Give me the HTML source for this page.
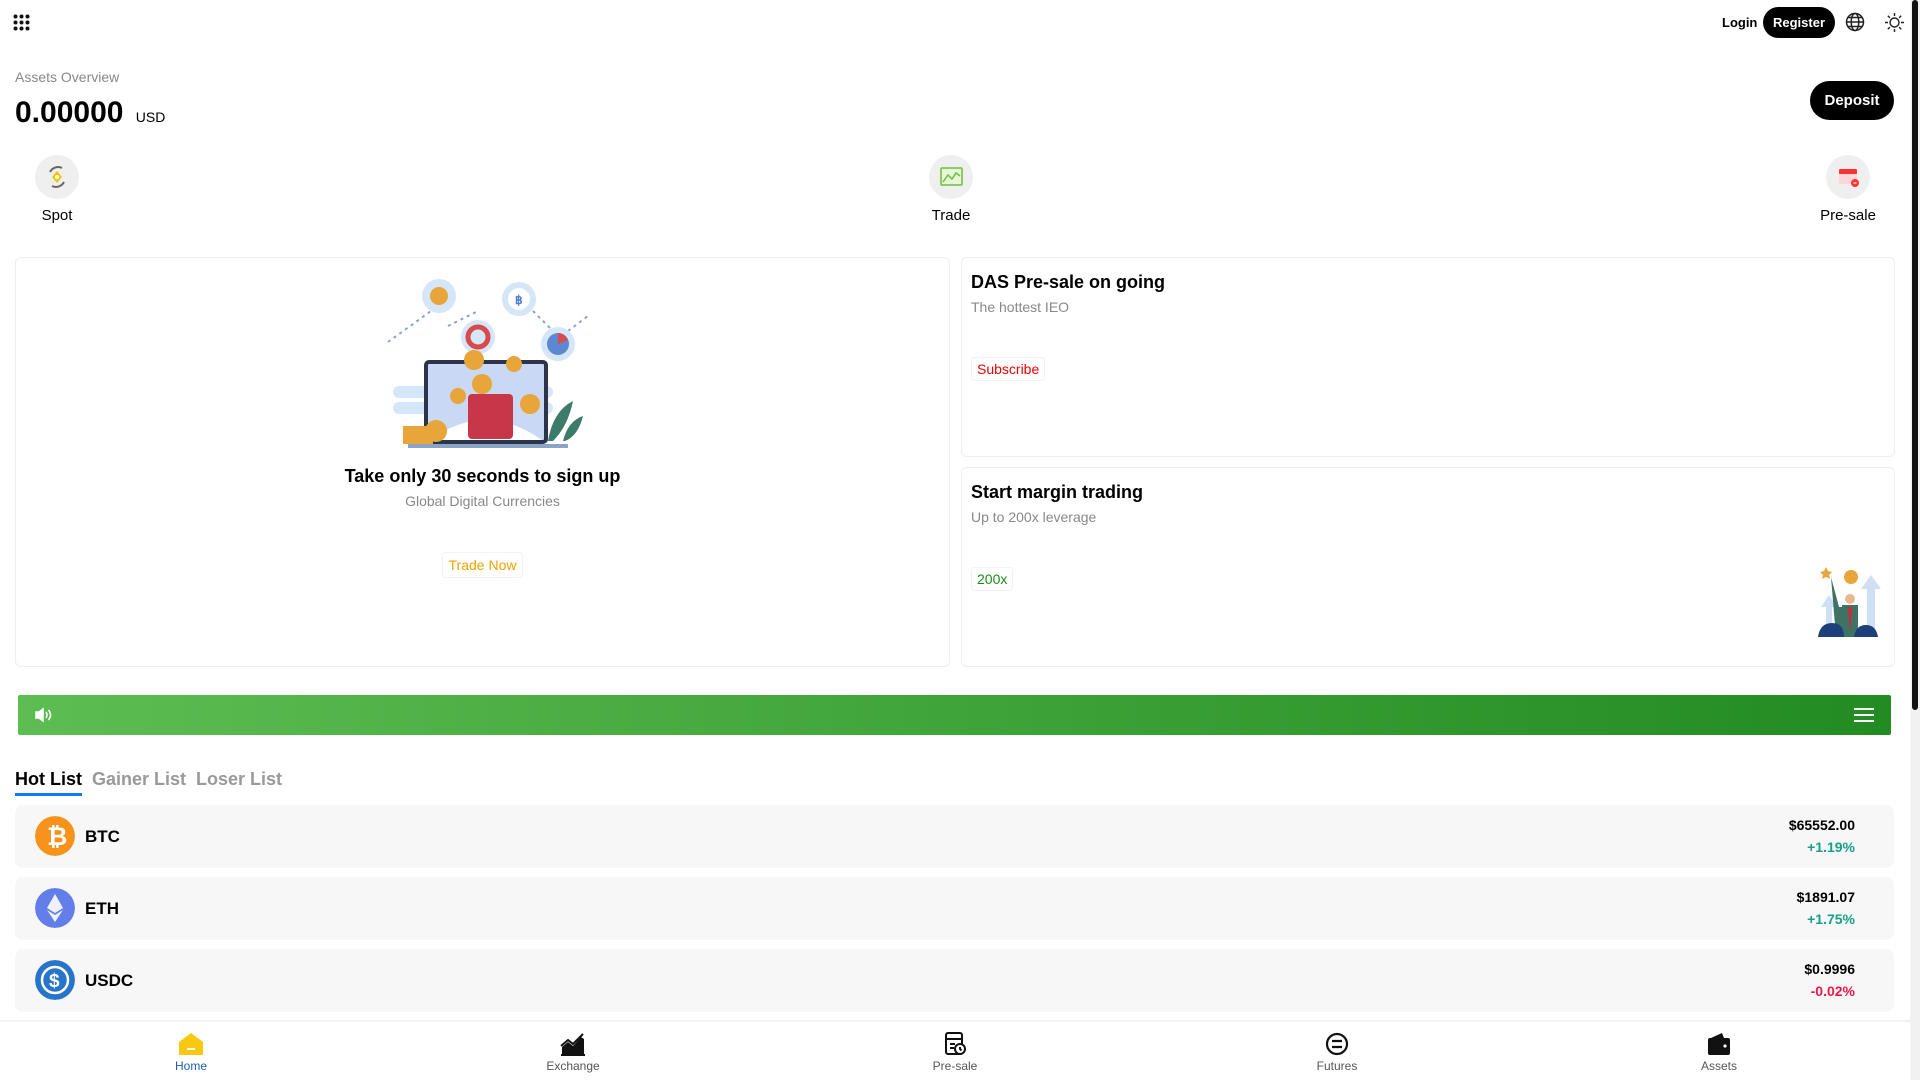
<!DOCTYPE html>
<html><head><meta charset="utf-8"><style>
*{margin:0;padding:0;box-sizing:border-box}
html,body{width:1920px;height:1080px;overflow:hidden;background:#fff;font-family:"Liberation Sans",Arial,sans-serif;color:#000}
.abs{position:absolute}
.sb{position:absolute;right:0;top:0;width:10px;height:1080px;background:#f1f1f1}
.sb i{position:absolute;left:2px;top:0;width:6px;height:710px;background:#111;border-radius:3px}
.ic{position:absolute;width:44px;height:44px;border-radius:50%;background:#efefef;top:155px}
.lbl{position:absolute;top:207px;font-size:15px;width:120px;text-align:center}
.card{position:absolute;border:1px solid #eee;border-radius:6px;background:#fff}
.row{position:absolute;left:15px;width:1879px;height:63px;background:#f7f7f7;border-radius:8px}
.row .c{position:absolute;left:20px;top:11px;width:40px;height:40px;border-radius:50%}
.row .n{position:absolute;left:70px;top:22px;font-size:17px;font-weight:bold}
.row .p{position:absolute;right:39px;top:12px;font-size:14px;font-weight:bold;text-align:right}
.row .ch{position:absolute;right:39px;top:34px;font-size:14px;font-weight:bold;text-align:right}
.nav{position:absolute;top:1020px;left:0;width:1910px;height:60px;border-top:2px solid #f2f2f2}
.ni{position:absolute;width:120px;text-align:center;font-size:12px;color:#555;top:0}
.ni svg{display:block;margin:10px auto 0}
.ni span{display:block;margin-top:3px}
</style></head><body>
<div class="sb"><i></i></div>
<svg class="abs" style="left:13px;top:14px" width="17" height="17" viewBox="0 0 17 17" fill="#111"><circle cx="2.5" cy="2.5" r="2"/><circle cx="8.5" cy="2.5" r="2"/><circle cx="14.5" cy="2.5" r="2"/><circle cx="2.5" cy="8.5" r="2"/><circle cx="8.5" cy="8.5" r="2"/><circle cx="14.5" cy="8.5" r="2"/><circle cx="2.5" cy="14.5" r="2"/><circle cx="8.5" cy="14.5" r="2"/><circle cx="14.5" cy="14.5" r="2"/></svg>
<div class="abs" style="left:1722px;top:15px;font-size:13px;font-weight:bold">Login</div>
<div class="abs" style="left:1763px;top:7px;width:72px;height:31px;background:#000;color:#fff;border-radius:16px;font-size:13px;font-weight:bold;text-align:center;line-height:31px">Register</div>
<svg class="abs" style="left:1845px;top:12px" width="20" height="20" viewBox="0 0 20 20" fill="none" stroke="#222" stroke-width="1.5"><circle cx="10" cy="10" r="8.5"/><ellipse cx="10" cy="10" rx="3.8" ry="8.5"/><path d="M1.5 10h17M3 5.5h14M3 14.5h14"/></svg>
<svg class="abs" style="left:1884px;top:12px" width="21" height="21" viewBox="0 0 21 21" fill="none" stroke="#222" stroke-width="1.4"><circle cx="10.5" cy="10.5" r="4.5"/><path d="M10.5 1v3M10.5 17v3M1 10.5h3M17 10.5h3M3.8 3.8l2.1 2.1M15.1 15.1l2.1 2.1M3.8 17.2l2.1-2.1M15.1 5.9l2.1-2.1"/></svg>

<div class="abs" style="left:15px;top:69px;font-size:14px;color:#888">Assets Overview</div>
<div class="abs" style="left:15px;top:96px;font-size:30px;font-weight:bold">0.00000 <span style="font-size:14px;font-weight:normal;margin-left:4px">USD</span></div>
<div class="abs" style="left:1810px;top:81px;width:84px;height:39px;background:#000;color:#fff;border-radius:20px;font-size:15px;font-weight:bold;text-align:center;line-height:39px">Deposit</div>

<div class="ic" style="left:35px"><svg width="44" height="44" viewBox="0 0 44 44"><path d="M15 17a9 9 0 0 1 12-4M29 27a9 9 0 0 1-12 4" stroke="#666" stroke-width="2" fill="none"/><path d="M22 16l5 6-5 6-5-6z" fill="#f5c400"/><circle cx="22" cy="22" r="2" fill="#fff"/></svg></div>
<div class="lbl" style="left:-3px">Spot</div>
<div class="ic" style="left:929px"><svg width="44" height="44" viewBox="0 0 44 44"><rect x="12" y="13" width="21" height="17" rx="1" fill="#e7f5d8" stroke="#6cbf3a" stroke-width="1.5"/><path d="M14 27l5-7 4 4 4-6 4 3" stroke="#6cbf3a" stroke-width="1.5" fill="none"/></svg></div>
<div class="lbl" style="left:891px">Trade</div>
<div class="ic" style="left:1826px"><svg width="44" height="44" viewBox="0 0 44 44"><rect x="13" y="14" width="18" height="15" rx="2" fill="#ffd6d6"/><rect x="13" y="14" width="18" height="5" rx="1" fill="#f33"/><circle cx="29" cy="28" r="4" fill="#f33"/><path d="M27.5 28h3" stroke="#fff" stroke-width="1.2"/></svg></div>
<div class="lbl" style="left:1788px">Pre-sale</div>

<div class="card" style="left:15px;top:257px;width:935px;height:410px">
  <svg class="abs" style="left:362px;top:18px" width="210" height="175" viewBox="0 0 210 175">
    <path d="M10 66L60 30M70 50L100 35M150 30L180 60M190 55L210 40" stroke="#8aa4c8" stroke-width="2" stroke-dasharray="3 4"/>
    <circle cx="61" cy="20" r="17" fill="#d5e6f8"/><circle cx="61" cy="20" r="9" fill="#e8a53a"/>
    <circle cx="141" cy="23" r="17" fill="#d5e6f8"/><circle cx="141" cy="23" r="11" fill="#fff"/><text x="137" y="28" font-size="12" fill="#4a7bd0" font-weight="bold">฿</text>
    <circle cx="100" cy="61" r="17" fill="#d5e6f8"/><circle cx="100" cy="61" r="10" fill="none" stroke="#d94a4a" stroke-width="5"/>
    <circle cx="180" cy="68" r="17" fill="#d5e6f8"/><circle cx="180" cy="68" r="11" fill="#5b88d0"/><path d="M180 68V57A11 11 0 0 1 190 64z" fill="#d94a4a"/>
    <rect x="15" y="110" width="160" height="12" rx="6" fill="#d5e6f8"/><rect x="15" y="126" width="160" height="12" rx="6" fill="#d5e6f8"/>
    <rect x="48" y="86" width="120" height="80" rx="3" fill="#c8d8f5" stroke="#2b3448" stroke-width="4"/>
    <path d="M52 164q55-40 112 0z" fill="#fff"/>
    <rect x="90" y="118" width="45" height="45" rx="4" fill="#c8364a"/>
    <rect x="30" y="168" width="160" height="4" fill="#8aa4c8"/>
    <circle cx="104" cy="108" r="10" fill="#e8a53a"/><circle cx="80" cy="120" r="8" fill="#e8a53a"/><circle cx="152" cy="128" r="10" fill="#e8a53a"/><circle cx="136" cy="88" r="8" fill="#e8a53a"/><circle cx="96" cy="84" r="10" fill="#e8a53a"/>
    <rect x="25" y="150" width="30" height="18" fill="#e8a53a"/><circle cx="58" cy="155" r="11" fill="#e8a53a"/>
    <path d="M170 165q5-30 25-40q-5 25-20 40zM185 165q5-20 20-25q-5 20-18 25z" fill="#3c7a6a"/>
  </svg>
  <div class="abs" style="left:0;width:100%;top:208px;text-align:center;font-size:18px;font-weight:bold">Take only 30 seconds to sign up</div>
  <div class="abs" style="left:0;width:100%;top:235px;text-align:center;font-size:14px;color:#888">Global Digital Currencies</div>
  <div class="abs" style="left:426px;top:294px;width:81px;height:26px;border:1px solid #f2f2f2;border-radius:4px;text-align:center;line-height:24px;font-size:14px;color:#f2a100">Trade Now</div>
</div>
<div class="card" style="left:961px;top:257px;width:934px;height:200px">
  <div class="abs" style="left:9px;top:14px;font-size:18px;font-weight:bold">DAS Pre-sale on going</div>
  <div class="abs" style="left:9px;top:41px;font-size:14px;color:#888">The hottest IEO</div>
  <div class="abs" style="left:9px;top:99px;height:24px;padding:0 5px;border:1px solid #f2f2f2;border-radius:4px;line-height:22px;font-size:14px;color:#e00">Subscribe</div>
</div>
<div class="card" style="left:961px;top:467px;width:934px;height:200px">
  <div class="abs" style="left:9px;top:14px;font-size:18px;font-weight:bold">Start margin trading</div>
  <div class="abs" style="left:9px;top:41px;font-size:14px;color:#888">Up to 200x leverage</div>
  <div class="abs" style="left:9px;top:99px;height:24px;padding:0 5px;border:1px solid #f2f2f2;border-radius:4px;line-height:22px;font-size:14px;color:#1a8a1a">200x</div>
  <svg class="abs" style="left:854px;top:97px" width="68" height="72" viewBox="0 0 68 72">
    <path d="M55 10l10 14h-6v48h-8V24h-6z" fill="#cfe0f5"/><path d="M13 30l8 12h-5v30h-6V42H5z" fill="#cfe0f5"/>
    <circle cx="35" cy="12" r="7" fill="#e8a53a"/>
    <path d="M15 12l8 30h18v30H20z" fill="#3e7264"/><rect x="26" y="40" width="16" height="32" fill="#3e7264"/>
    <path d="M32 42l2 25 2-25z" fill="#d23"/><circle cx="34" cy="34" r="5" fill="#e9b98e"/>
    <path d="M2 72q2-14 14-14q12 0 12 14zM38 72q2-12 12-12q10 0 12 12z" fill="#1d3f7a"/>
    <path d="M10 2l2 4 4 1-3 3 1 4-4-2-4 2 1-4-3-3 4-1z" fill="#e8a53a"/>
  </svg>
</div>

<div class="abs" style="left:18px;top:695px;width:1873px;height:40px;border-radius:2px;background:linear-gradient(90deg,#5cbd52,#228b22)">
  <svg class="abs" style="left:17px;top:12px" width="18" height="16" viewBox="0 0 18 16" fill="none" stroke="#fff" stroke-width="1.6"><path d="M1 5h3l4-3v12l-4-3H1z" fill="#fff"/><path d="M11 5q2 3 0 6M13.5 3q4 5 0 10"/></svg>
  <svg class="abs" style="left:1836px;top:12px" width="20" height="16" viewBox="0 0 20 16" stroke="#fff" stroke-width="2"><path d="M0 2h20M0 8h20M0 14h20"/></svg>
</div>

<div class="abs" style="left:15px;top:769px;font-size:18px;font-weight:bold">Hot List</div>
<div class="abs" style="left:15px;top:793px;width:67px;height:3px;background:#1677ff"></div>
<div class="abs" style="left:92px;top:769px;font-size:18px;font-weight:bold;color:#999">Gainer List</div>
<div class="abs" style="left:196px;top:769px;font-size:18px;font-weight:bold;color:#999">Loser List</div>

<div class="row" style="top:805px"><svg class="c" viewBox="0 0 40 40"><circle cx="20" cy="20" r="20" fill="#f7931a"/><text x="12" y="29" font-size="25" font-weight="bold" fill="#fff" font-family="Liberation Sans">₿</text></svg><div class="n">BTC</div><div class="p">$65552.00</div><div class="ch" style="color:#16a085">+1.19%</div></div>
<div class="row" style="top:877px"><svg class="c" viewBox="0 0 40 40"><circle cx="20" cy="20" r="20" fill="#627eea"/><path d="M20 6l-8 14 8 5 8-5z" fill="#fff" opacity=".9"/><path d="M20 27l-8-5 8 12 8-12z" fill="#fff" opacity=".9"/></svg><div class="n">ETH</div><div class="p">$1891.07</div><div class="ch" style="color:#16a085">+1.75%</div></div>
<div class="row" style="top:949px"><svg class="c" viewBox="0 0 40 40"><circle cx="20" cy="20" r="20" fill="#2775ca"/><circle cx="20" cy="20" r="13" fill="none" stroke="#fff" stroke-width="2.5"/><text x="14" y="27" font-size="19" font-weight="bold" fill="#fff" font-family="Liberation Sans">$</text></svg><div class="n">USDC</div><div class="p">$0.9996</div><div class="ch" style="color:#e8194a">-0.02%</div></div>

<div class="nav">
  <div class="ni" style="left:131px;color:#1a5fb4"><svg width="26" height="24" viewBox="0 0 26 24"><path d="M13 1L1 10v13h24V10z" fill="#f9c810"/><rect x="9" y="16" width="8" height="2" fill="#fff"/></svg><span>Home</span></div>
  <div class="ni" style="left:513px"><svg width="26" height="24" viewBox="0 0 26 24"><path d="M2 22V15l6-5 5 4 8-9 3 2v15z" fill="#111"/><path d="M1 14l7-6 5 4 10-10" stroke="#111" stroke-width="2" fill="none"/><rect x="1" y="22" width="24" height="2" fill="#111"/></svg><span>Exchange</span></div>
  <div class="ni" style="left:895px"><svg width="26" height="24" viewBox="0 0 26 24" fill="none" stroke="#111" stroke-width="2"><rect x="4" y="1" width="16" height="21" rx="2"/><path d="M4 7h16M8 12h5M8 16h4"/><circle cx="18" cy="17" r="5" fill="#fff"/><path d="M18 15v2l1.5 1.5"/></svg><span>Pre-sale</span></div>
  <div class="ni" style="left:1277px"><svg width="26" height="24" viewBox="0 0 26 24" fill="none" stroke="#111" stroke-width="2.2"><circle cx="13" cy="12" r="10"/><path d="M8 9h10M8 15h10"/></svg><span>Futures</span></div>
  <div class="ni" style="left:1659px"><svg width="26" height="24" viewBox="0 0 26 24"><path d="M5 6l11-5 2 5z" fill="#111"/><rect x="2" y="6" width="22" height="17" rx="2" fill="#111"/><circle cx="19" cy="14" r="1.6" fill="#fff"/></svg><span>Assets</span></div>
</div>
</body></html>
